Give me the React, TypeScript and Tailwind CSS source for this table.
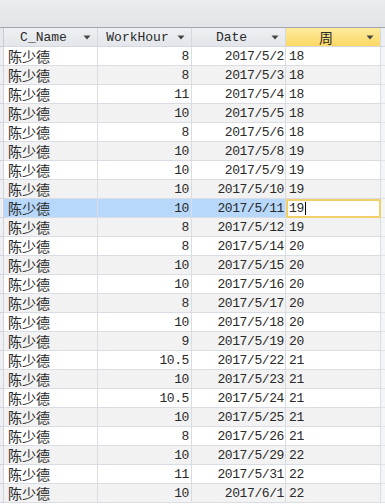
import React from "react";

type Row = { name: string; hours: string; date: string; week: string };

const rows: Row[] = [
  ["8", "2017/5/2", "18"],
  ["8", "2017/5/3", "18"],
  ["11", "2017/5/4", "18"],
  ["10", "2017/5/5", "18"],
  ["8", "2017/5/6", "18"],
  ["10", "2017/5/8", "19"],
  ["10", "2017/5/9", "19"],
  ["10", "2017/5/10", "19"],
  ["10", "2017/5/11", "19"],
  ["8", "2017/5/12", "19"],
  ["8", "2017/5/14", "20"],
  ["10", "2017/5/15", "20"],
  ["10", "2017/5/16", "20"],
  ["8", "2017/5/17", "20"],
  ["10", "2017/5/18", "20"],
  ["9", "2017/5/19", "20"],
  ["10.5", "2017/5/22", "21"],
  ["10", "2017/5/23", "21"],
  ["10.5", "2017/5/24", "21"],
  ["10", "2017/5/25", "21"],
  ["8", "2017/5/26", "21"],
  ["10", "2017/5/29", "22"],
  ["11", "2017/5/31", "22"],
  ["10", "2017/6/1", "22"],
].map(([hours, date, week]) => ({ name: "陈少德", hours, date, week }));

const SELECTED = 8;

// body digits are a touch narrower than the header labels
const mono = "font-['Liberation_Mono','Noto_Sans_CJK_SC',monospace] text-[13px] tracking-[-0.4px]";
const monoHead = "font-['Liberation_Mono','Noto_Sans_CJK_SC',monospace] text-[13px]";
const cjk = "font-['Noto_Sans_CJK_SC',sans-serif] text-[14px]";

function Arrow() {
  return (
    <svg width="8" height="5" viewBox="0 0 8 5" className="shrink-0">
      <path d="M0.5 0.5h7L4 4.5z" fill="#444" />
    </svg>
  );
}

function HeaderCell({ label, yellow, isCjk }: { label: string; yellow?: boolean; isCjk?: boolean }) {
  return (
    <div
      className={`flex h-[19px] items-center border-r border-b border-[#d5d9df] pr-[6px] ${
        yellow ? "bg-gradient-to-b from-[#fdeb9c] to-[#fbd863]" : "bg-gradient-to-b from-[#eef0f3] to-[#e3e6ea]"
      }`}
    >
      <span className={`flex-1 text-center leading-none text-[#2a2a2a] ${isCjk ? cjk : monoHead}`}>{label}</span>
      <Arrow />
    </div>
  );
}

export default function App() {
  return (
    <div className="h-[504px] w-[385px] overflow-hidden bg-white">
      <div className="h-[28px] border-b border-[#a3a7ad] bg-gradient-to-b from-[#ebecef] to-[#e2e4e8]" />
      <div className="grid grid-cols-[4px_94px_94px_94px_95px_4px]">
        <div className="h-[19px] border-r border-b border-[#c8ccd2] bg-[#e6e8eb]" />
        <HeaderCell label="C_Name" />
        <HeaderCell label="WorkHour" />
        <HeaderCell label="Date" />
        <HeaderCell label="周" yellow isCjk />
        <div className="h-[19px] border-b border-[#d5d9df] bg-[#eceef1]" />

        {rows.map((r, i) => {
          const sel = i === SELECTED;
          const stripe = i % 2 === 1 ? "bg-[#f2f2f2]" : "bg-white";
          const bg = sel ? "bg-[#b7d8fb]" : stripe;
          const cell = `h-[19px] border-r border-b border-[#dadde3] ${bg}`;
          return (
            <React.Fragment key={i}>
              <div className="h-[19px] border-r border-b border-[#d0d4da] bg-[#eef0f3]" />
              <div className={`${cell} flex items-center pl-[4px] text-[#2a2a2a] ${cjk} leading-none`}>{r.name}</div>
              <div className={`${cell} flex items-center justify-end pr-[2px] text-[#2a2a2a] ${mono} leading-none`}>{r.hours}</div>
              <div className={`${cell} flex items-center justify-end pr-[1px] text-[#2a2a2a] ${mono} leading-none`}>{r.date}</div>
              {sel ? (
                <div className="flex h-[19px] items-center border-2 border-[#f0d06a] bg-white pl-[1px] text-[#2a2a2a]">
                  <span className={`${mono} leading-none`}>{r.week}</span>
                  <span className="ml-[1px] h-[13px] w-px bg-black" />
                </div>
              ) : (
                <div className={`h-[19px] border-r border-b border-[#dadde3] ${stripe} flex items-center pl-[3px] text-[#2a2a2a] ${mono} leading-none`}>
                  {r.week}
                </div>
              )}
              <div className="h-[19px] border-b border-[#e0e3e8] bg-[#f4f5f7]" />
            </React.Fragment>
          );
        })}
      </div>
    </div>
  );
}
